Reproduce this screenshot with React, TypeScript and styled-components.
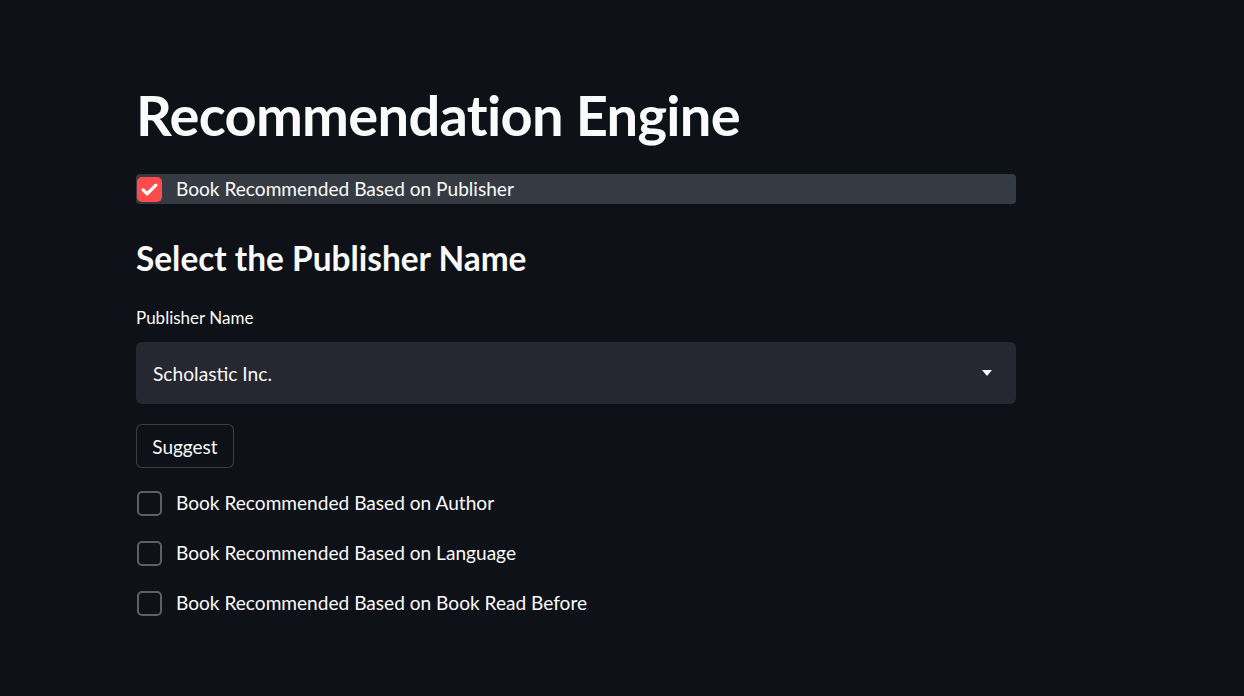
import React from "react";
import styled, { createGlobalStyle } from "styled-components";

const Global = createGlobalStyle`
  html, body { margin: 0; padding: 0; background: #0e1117; }
  body { font-family: Lato, "Noto Sans", sans-serif; color: #fafafa; }
  * { box-sizing: border-box; }
`;

const Page = styled.div`
  min-height: 696px;
  background: #0e1117;
  padding: 77px 0 0 136px;
`;

const Main = styled.main`
  width: 880px;
  display: flex;
  flex-direction: column;
`;

const Title = styled.h1`
  margin: 0;
  height: 76px;
  line-height: 76px;
  font-size: 56px;
  font-weight: 700;
  letter-spacing: -0.7px;
  white-space: nowrap;
`;

const CheckRow = styled.label<{ $active?: boolean; $mt: number }>`
  display: flex;
  align-items: center;
  gap: 14px;
  height: 30px;
  margin-top: ${(p) => p.$mt}px;
  padding-left: 1px;
  border-radius: 4px;
  background: ${(p) => (p.$active ? "#363a43" : "transparent")};
  font-size: 19.1px;
  line-height: 30px;
  cursor: pointer;
`;

const Box = styled.span<{ $checked?: boolean }>`
  width: 25px;
  height: 25px;
  flex: 0 0 25px;
  border-radius: 5px;
  display: flex;
  align-items: center;
  justify-content: center;
  background: ${(p) => (p.$checked ? "#ff4b4b" : "transparent")};
  border: ${(p) => (p.$checked ? "none" : "2px solid #5d6067")};
`;

const Subtitle = styled.h3`
  margin: 34px 0 0;
  height: 40px;
  line-height: 40px;
  font-size: 33.4px;
  font-weight: 700;
`;

const Label = styled.div`
  margin-top: 28px;
  height: 24px;
  line-height: 24px;
  font-size: 17px;
`;

const Select = styled.div`
  margin-top: 12px;
  height: 62px;
  border-radius: 6px;
  background: #262730;
  display: flex;
  align-items: center;
  justify-content: space-between;
  padding: 0 24px 0 17px;
  font-size: 19.2px;
`;

const Button = styled.button`
  margin-top: 20px;
  align-self: flex-start;
  height: 44px;
  width: 98px;
  border-radius: 6px;
  border: 1px solid rgba(250, 250, 250, 0.2);
  background: #0e1117;
  color: #fafafa;
  font-family: inherit;
  font-size: 19px;
  padding: 0;
`;

const Check = () => (
  <svg width="19" height="19" viewBox="0 0 24 24" fill="none">
    <path d="M4 12.5l5 5L20 6.5" stroke="#fff" strokeWidth="4.2" strokeLinecap="round" strokeLinejoin="round" />
  </svg>
);

const Caret = () => (
  <svg width="10" height="6" viewBox="0 0 10 6">
    <path d="M0 0h10L5 6z" fill="#fafafa" />
  </svg>
);

export default function App() {
  return (
    <>
      <Global />
      <Page>
        <Main>
          <Title>Recommendation Engine</Title>
          <CheckRow $active $mt={21}>
            <Box $checked>
              <Check />
            </Box>
            Book Recommended Based on Publisher
          </CheckRow>
          <Subtitle>Select the Publisher Name</Subtitle>
          <Label>Publisher Name</Label>
          <Select>
            <span>Scholastic Inc.</span>
            <Caret />
          </Select>
          <Button>Suggest</Button>
          <CheckRow $mt={20}>
            <Box />
            Book Recommended Based on Author
          </CheckRow>
          <CheckRow $mt={20}>
            <Box />
            Book Recommended Based on Language
          </CheckRow>
          <CheckRow $mt={20}>
            <Box />
            Book Recommended Based on Book Read Before
          </CheckRow>
        </Main>
      </Page>
    </>
  );
}
